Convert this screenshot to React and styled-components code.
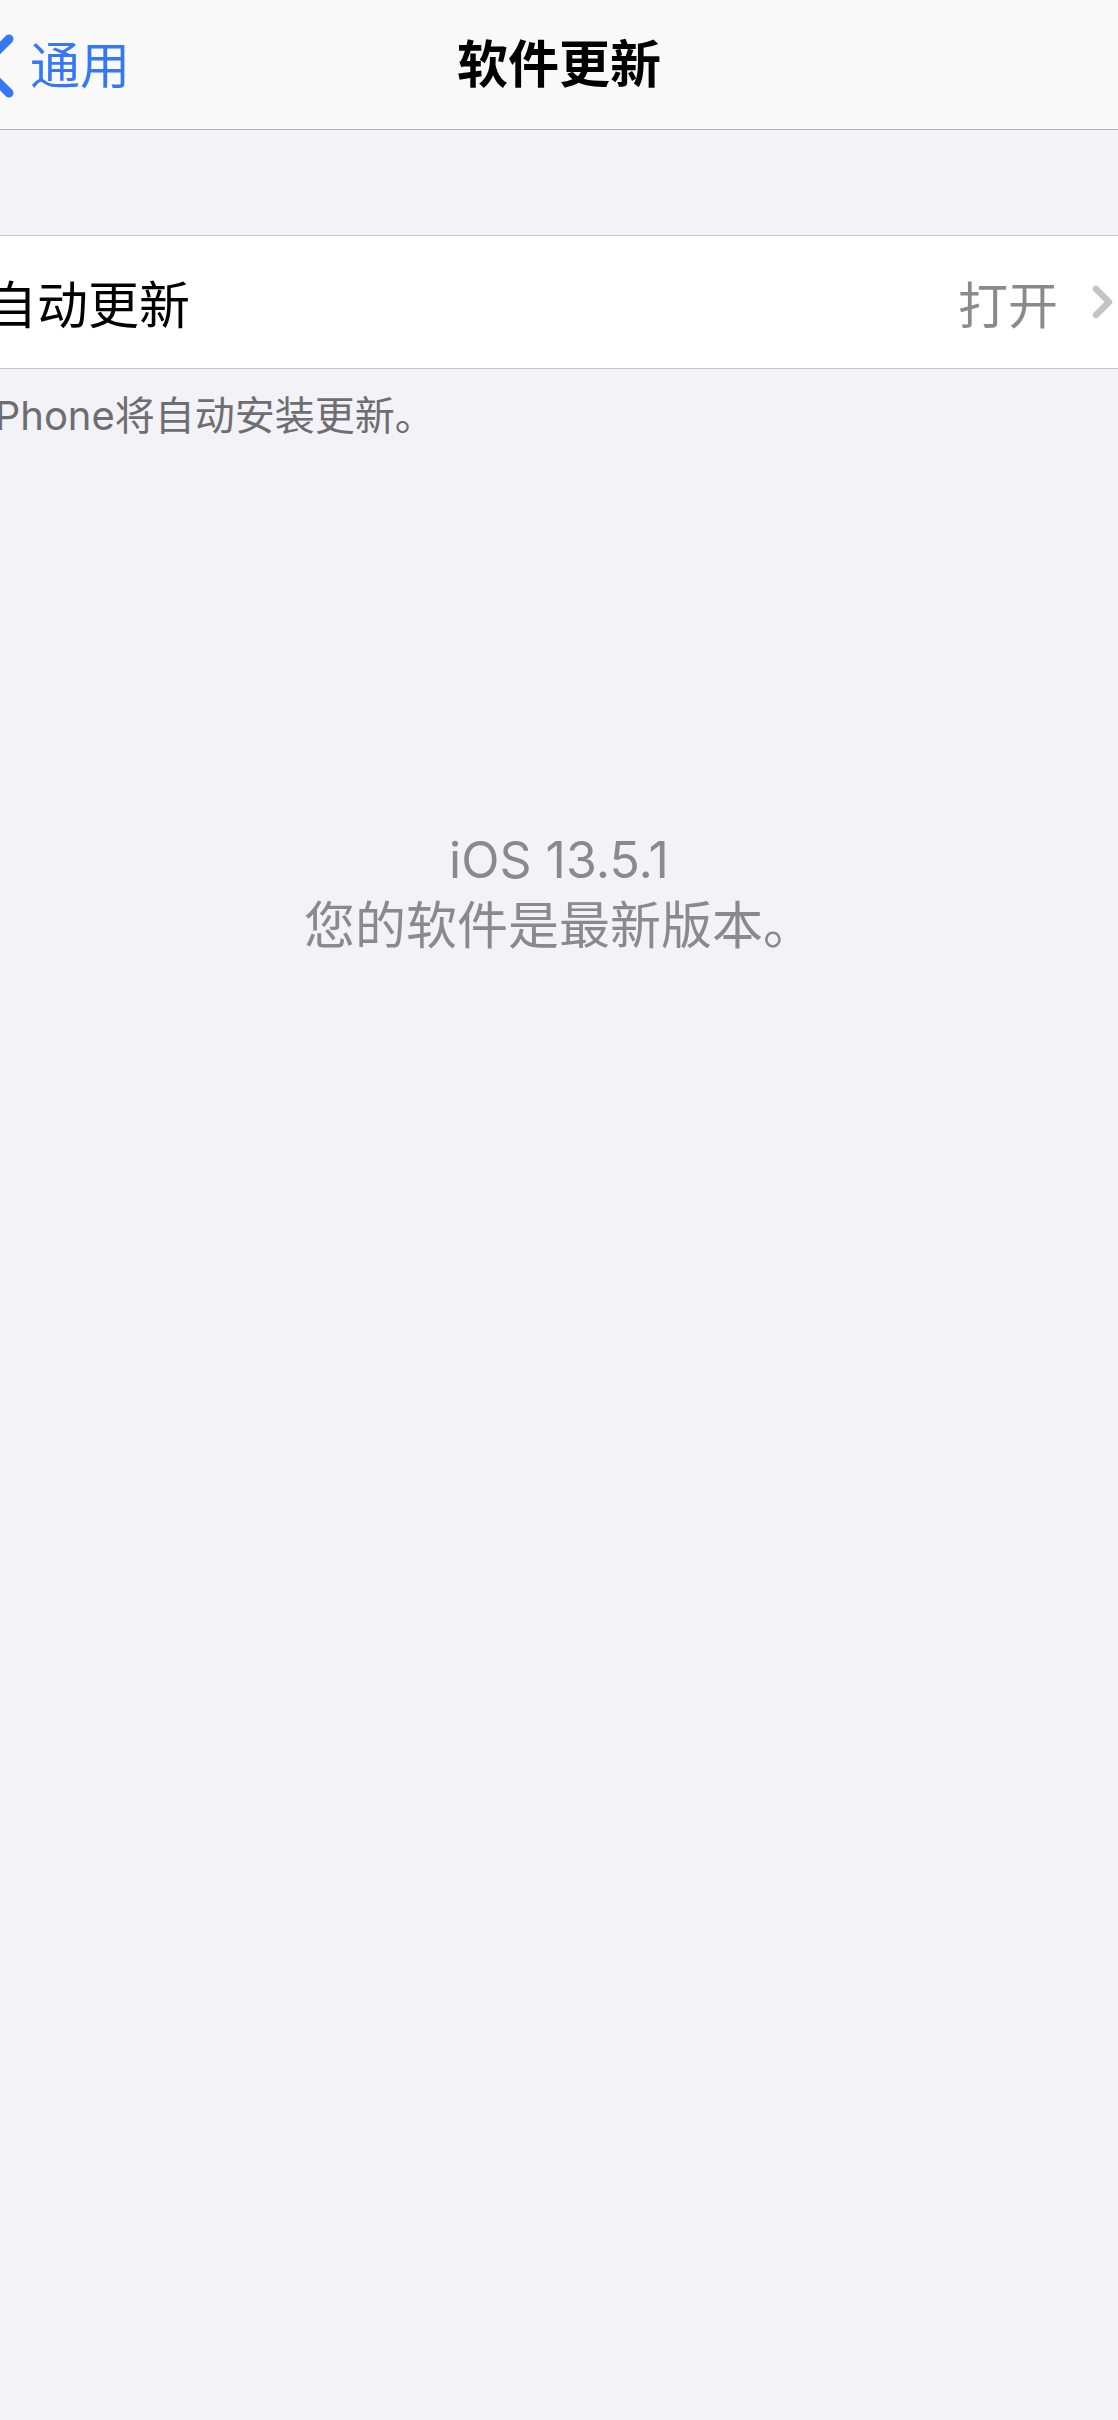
import React from 'react'
import styled, { createGlobalStyle } from 'styled-components'

const GlobalStyle = createGlobalStyle`
    html, body {
        margin: 0;
        padding: 0;
        background: #f2f2f7;
    }
    body {
        font-family: "Inter", "Noto Sans CJK SC", sans-serif;
        overflow-x: hidden;
    }
`

const Screen = styled.div`
    width: 1118px;
    min-height: 2420px;
    background: #f2f2f7;
    overflow: hidden;
`

const NavBar = styled.header`
    height: 129px;
    background: #f9f9f9;
    border-bottom: 1px solid #b4b4b6;
    display: grid;
    grid-template-columns: 1fr auto 1fr;
    align-items: center;
`

const BackButton = styled.a`
    display: flex;
    align-items: center;
    gap: 15px;
    color: #3478f6;
    font-size: 50px;
    line-height: 1;
    text-decoration: none;
    padding-top: 2px;

    svg {
        margin-left: -25px;
        flex-shrink: 0;
    }
`

const Title = styled.h1`
    margin: 0;
    font-size: 51px;
    font-weight: 700;
    color: #000;
    line-height: 1;
`

const SectionGap = styled.div`
    height: 105px;
`

const Cell = styled.div`
    height: 132px;
    background: #fff;
    border-top: 1px solid #c8c7cc;
    border-bottom: 1px solid #c8c7cc;
    display: flex;
    align-items: center;
    justify-content: space-between;
    padding-right: 5px;
`

const CellLabel = styled.span`
    margin-left: -14px;
    font-size: 51px;
    color: #000;
`

const CellDetail = styled.span`
    display: flex;
    align-items: center;
    gap: 34px;
    font-size: 50px;
    color: #8a8a8e;
`

const Footer = styled.p`
    margin: 0;
    padding-top: 23px;
    margin-left: -15px;
    font-size: 40px;
    line-height: 48px;
    color: #6d6d72;
`

const Status = styled.div`
    margin-top: 388px;
    text-align: center;
    line-height: 65px;
    color: #8a8a8e;
`

const StatusLine = styled.div`
    font-size: ${p => p.$size}px;
`

function BackChevron() {
    return (
        <svg width="40" height="64" viewBox="0 0 40 64">
            <path d="M34 5 L7 32 L34 59" fill="none" stroke="#3478f6" strokeWidth="9" strokeLinecap="round" strokeLinejoin="round" />
        </svg>
    )
}

function DisclosureChevron() {
    return (
        <svg width="21" height="34" viewBox="0 0 21 34">
            <path d="M4 4 L17 17 L4 30" fill="none" stroke="#c4c4c7" strokeWidth="6.5" strokeLinecap="round" strokeLinejoin="round" />
        </svg>
    )
}

export default function App() {
    return (
        <>
            <GlobalStyle />
            <Screen>
                <NavBar>
                    <BackButton href="#">
                        <BackChevron />
                        <span>通用</span>
                    </BackButton>
                    <Title>软件更新</Title>
                    <div />
                </NavBar>

                <SectionGap />

                <Cell>
                    <CellLabel>自动更新</CellLabel>
                    <CellDetail>
                        <span>打开</span>
                        <DisclosureChevron />
                    </CellDetail>
                </Cell>
                <Footer>iPhone将自动安装更新。</Footer>

                <Status>
                    <StatusLine $size={50}>iOS 13.5.1</StatusLine>
                    <StatusLine $size={51}>您的软件是最新版本。</StatusLine>
                </Status>
            </Screen>
        </>
    )
}
